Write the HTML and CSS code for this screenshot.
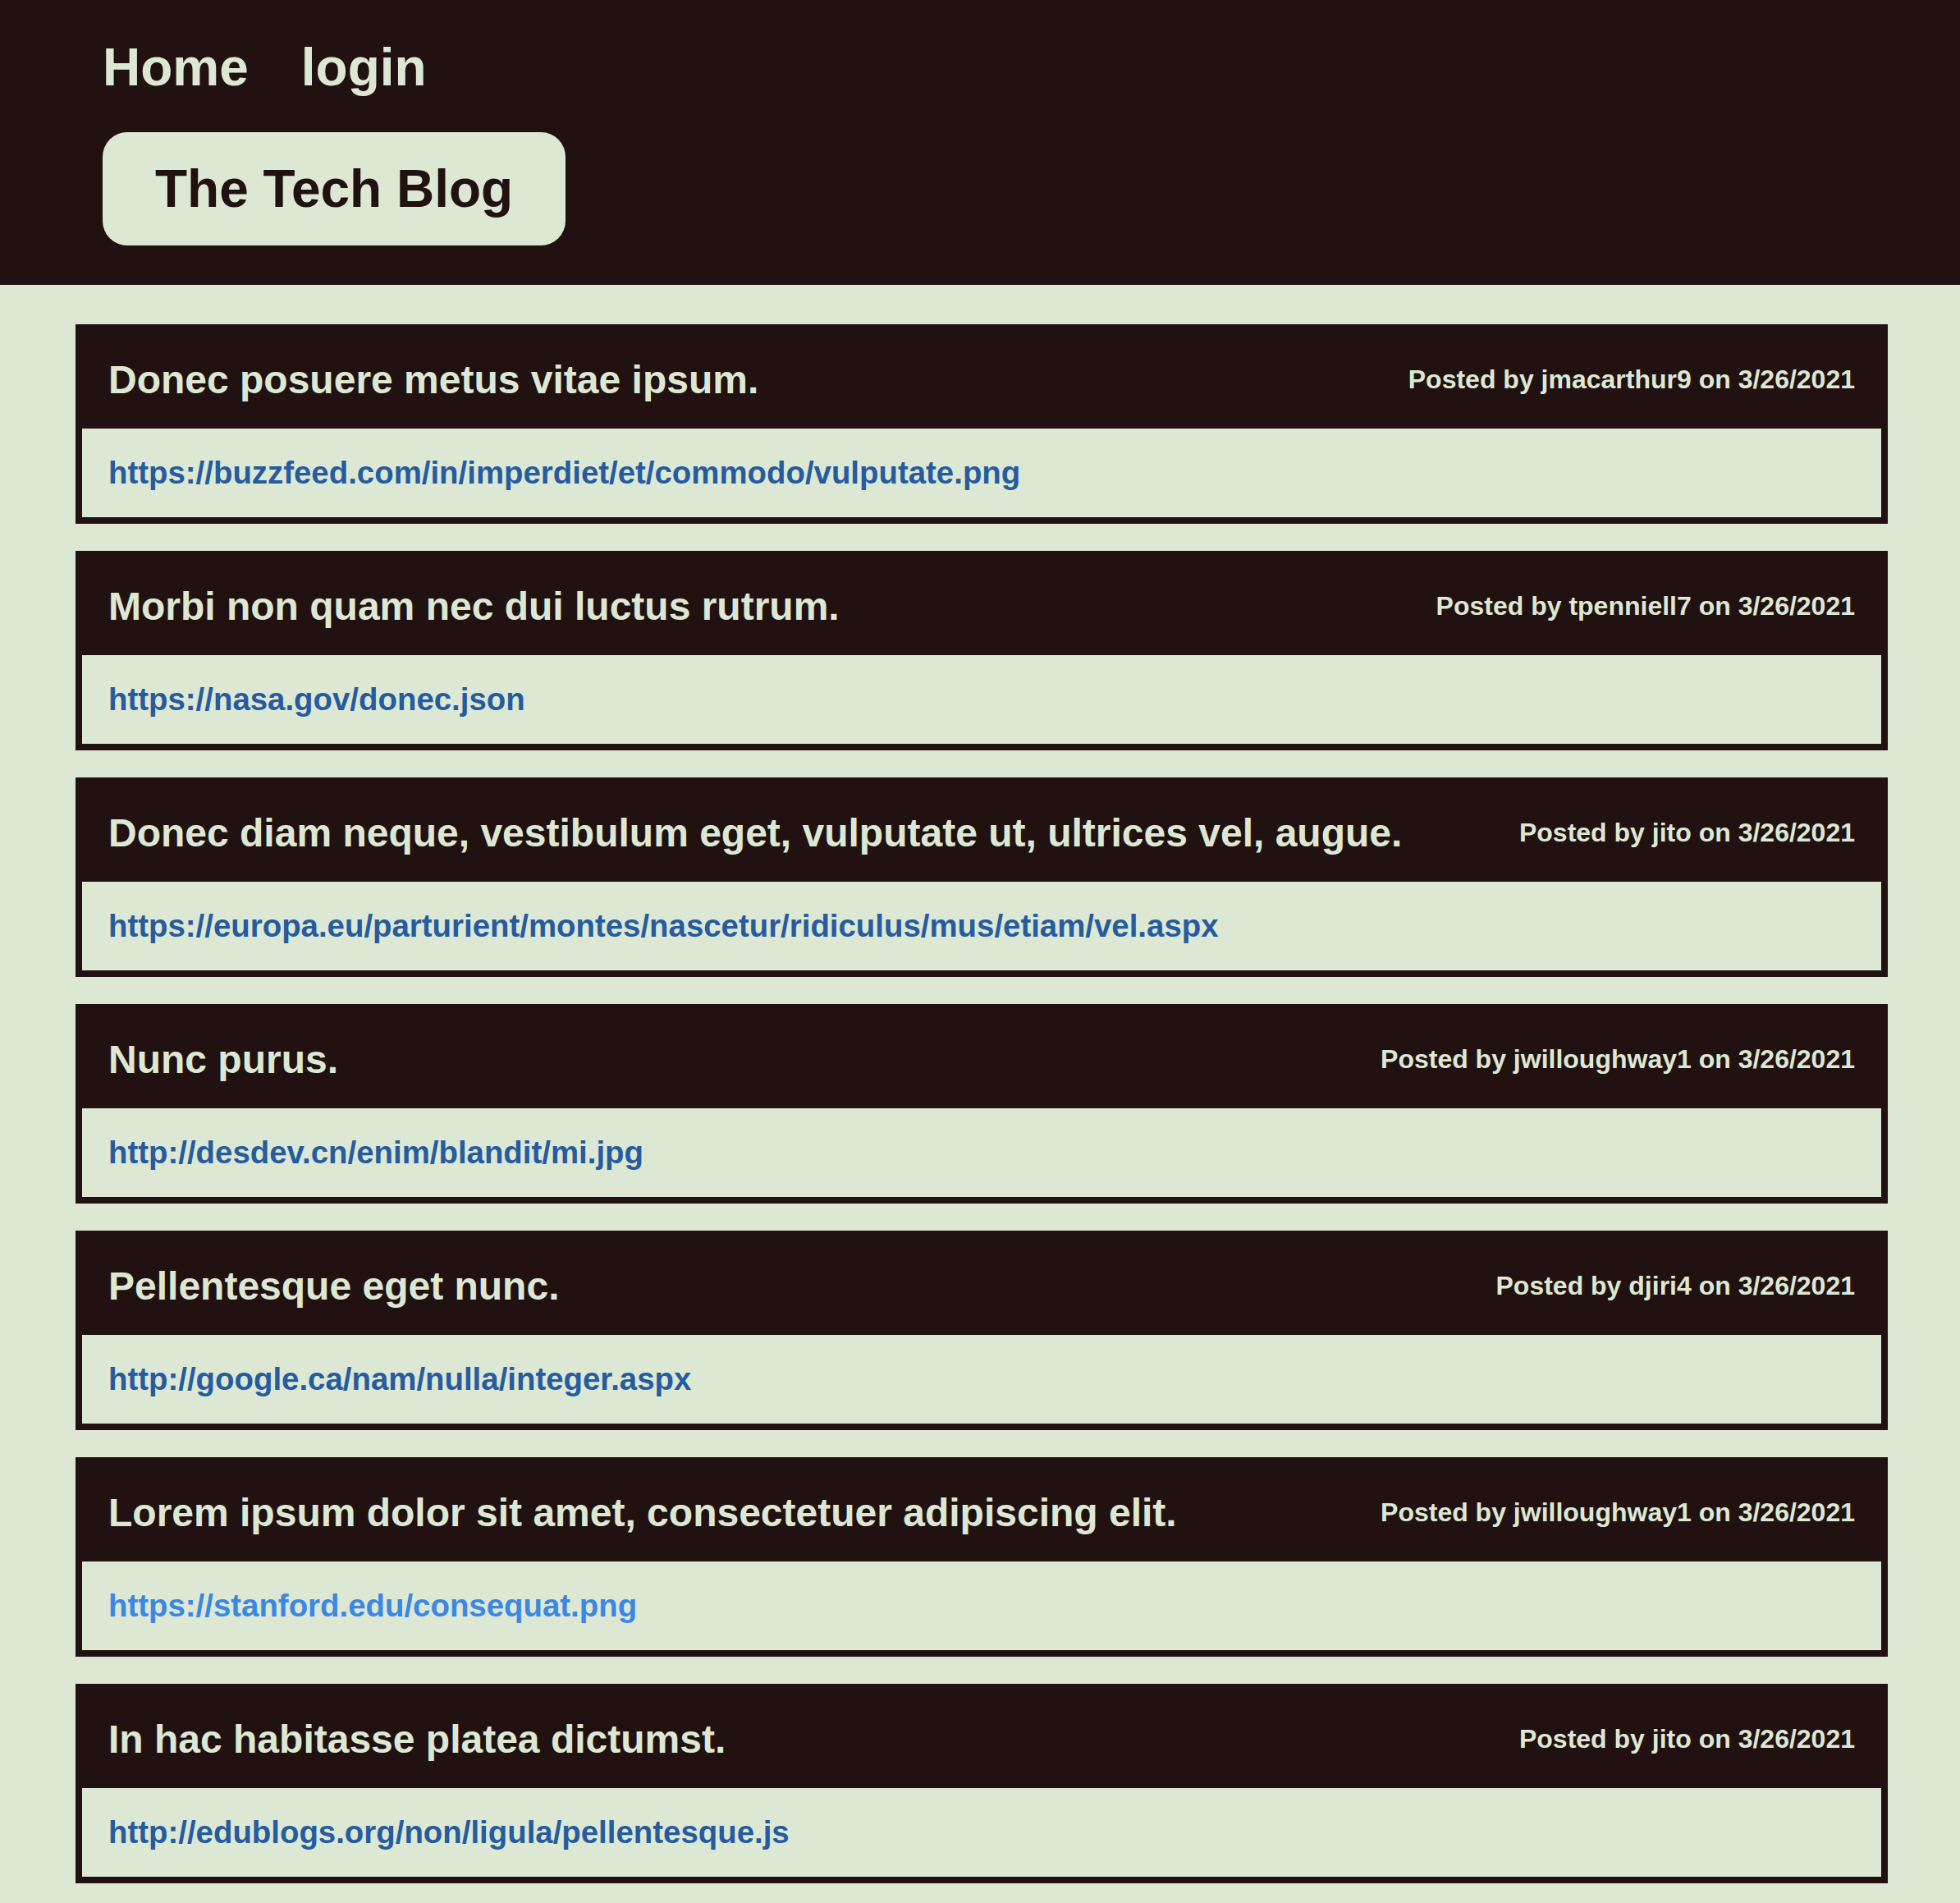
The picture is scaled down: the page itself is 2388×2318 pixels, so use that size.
FILE: index.html
```html
<!DOCTYPE html>
<html lang="en">
<head>
<meta charset="utf-8">
<title>The Tech Blog</title>
<link rel="stylesheet" href="styles.css">
</head>
<body>
<header class="site-header">
  <nav class="nav">
    <a class="nav-link" href="#">Home</a>
    <a class="nav-link" href="#">login</a>
  </nav>
  <div class="brand"><h1 class="brand-title">The Tech Blog</h1></div>
</header>
<main class="posts">
  <article class="post">
    <div class="post-head"><h2 class="post-title">Donec posuere metus vitae ipsum.</h2><span class="post-meta">Posted by jmacarthur9 on 3/26/2021</span></div>
    <div class="post-body"><a class="post-link" href="#">https://buzzfeed.com/in/imperdiet/et/commodo/vulputate.png</a></div>
  </article>
  <article class="post">
    <div class="post-head"><h2 class="post-title">Morbi non quam nec dui luctus rutrum.</h2><span class="post-meta">Posted by tpenniell7 on 3/26/2021</span></div>
    <div class="post-body"><a class="post-link" href="#">https://nasa.gov/donec.json</a></div>
  </article>
  <article class="post">
    <div class="post-head"><h2 class="post-title">Donec diam neque, vestibulum eget, vulputate ut, ultrices vel, augue.</h2><span class="post-meta">Posted by jito on 3/26/2021</span></div>
    <div class="post-body"><a class="post-link" href="#">https://europa.eu/parturient/montes/nascetur/ridiculus/mus/etiam/vel.aspx</a></div>
  </article>
  <article class="post">
    <div class="post-head"><h2 class="post-title">Nunc purus.</h2><span class="post-meta">Posted by jwilloughway1 on 3/26/2021</span></div>
    <div class="post-body"><a class="post-link" href="#">http://desdev.cn/enim/blandit/mi.jpg</a></div>
  </article>
  <article class="post">
    <div class="post-head"><h2 class="post-title">Pellentesque eget nunc.</h2><span class="post-meta">Posted by djiri4 on 3/26/2021</span></div>
    <div class="post-body"><a class="post-link" href="#">http://google.ca/nam/nulla/integer.aspx</a></div>
  </article>
  <article class="post">
    <div class="post-head"><h2 class="post-title">Lorem ipsum dolor sit amet, consectetuer adipiscing elit.</h2><span class="post-meta">Posted by jwilloughway1 on 3/26/2021</span></div>
    <div class="post-body"><a class="post-link post-link-active" href="#">https://stanford.edu/consequat.png</a></div>
  </article>
  <article class="post">
    <div class="post-head"><h2 class="post-title">In hac habitasse platea dictumst.</h2><span class="post-meta">Posted by jito on 3/26/2021</span></div>
    <div class="post-body"><a class="post-link" href="#">http://edublogs.org/non/ligula/pellentesque.js</a></div>
  </article>
</main>
</body>
</html>
```
FILE: styles.css
```css
* { box-sizing: border-box; }

body {
  margin: 0;
  background: #dce8d4;
  font-family: "Liberation Sans", Arial, Helvetica, sans-serif;
  font-weight: bold;
  color: #221111;
}

.site-header {
  background: #221111;
  padding: 45px 125px 48px;
}

.nav {
  display: flex;
  gap: 64px;
}

.nav-link {
  font-size: 64px;
  color: #dce8d4;
  text-decoration: none;
}

.brand {
  display: inline-block;
  margin-top: 42px;
  padding: 32px 64px;
  background: #dce8d4;
  border-radius: 30px;
}

.brand-title {
  margin: 0;
  font-size: 64px;
  color: #221111;
  font-weight: bold;
}

.posts {
  display: flex;
  flex-direction: column;
  gap: 33px;
  padding: 48px 88px 32px 92px;
}

.post {
  border: 8px solid #221111;
}

.post-head {
  background: #221111;
  padding: 32px;
  display: flex;
  justify-content: space-between;
  align-items: center;
  gap: 32px;
}

.post-title {
  margin: 0;
  font-size: 48px;
  color: #dce8d4;
  font-weight: bold;
}

.post-meta {
  font-size: 32px;
  color: #dce8d4;
  white-space: nowrap;
}

.post-body {
  background: #dce8d4;
  padding: 32px 32px;
}

.post-link {
  font-size: 38.4px;
  color: #265c9f;
  text-decoration: none;
}

.post-link-active {
  color: #3b87e4;
}
```
